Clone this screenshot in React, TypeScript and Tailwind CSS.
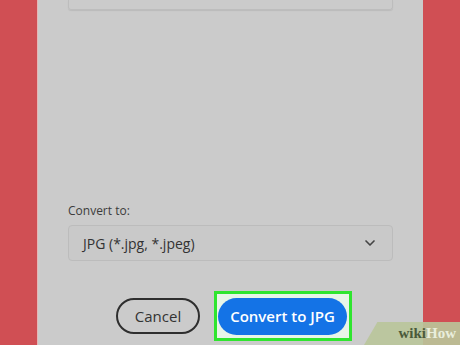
import { ChevronDown } from 'lucide-react';

export default function App() {
  return (
    <div
      className="relative w-[460px] h-[345px] overflow-hidden bg-[#d04f54] flex"
      style={{ fontFamily: '"Open Sans", "Noto Sans", sans-serif' }}
    >
      <div className="w-[37px] shrink-0" />
      <div className="w-[386px] shrink-0 bg-[#cbcbcb] border-l border-[#e6b5b5] flex flex-col">
        {/* top field, cut off */}
        <div className="mx-[30px] h-[10px] border border-t-0 border-[#bdbdbd] rounded-b-[3px] shadow-[0_1px_1px_rgba(0,0,0,0.08)]" />

        <div className="mt-[195px] mx-[30px] text-[12px] text-[#3c3c3c] leading-none">Convert to:</div>
        <div className="mt-[8px] mx-[30px] h-[36px] border border-[#bcbcbc] rounded-[4px] bg-[#c9c9c9] flex items-center justify-between pl-[14px] pr-[14px] text-[#333]">
          <span className="text-[14px]">JPG (*.jpg, *.jpeg)</span>
          <ChevronDown size={16} strokeWidth={2.5} className="text-[#444]" />
        </div>

        <div className="mt-[30px] flex items-start">
          <div className="ml-[78px] mt-[7px] w-[84px] h-[36px] rounded-full border-2 border-[#2e2e2e] flex items-center justify-center text-[15px] text-[#333]">
            Cancel
          </div>
          <div className="ml-[14px] w-[138px] h-[50px] border-[3px] border-[#2fe52f] bg-[#e8f5e8] p-[1px] flex items-center">
            <div className="w-[129px] h-[37px] rounded-full bg-[#1473e6] flex items-center justify-center text-white font-semibold text-[15px]">
              Convert to JPG
            </div>
          </div>
        </div>
      </div>

      {/* wikiHow watermark */}
      <div className="absolute right-0 bottom-0 w-[96px] h-[23px] bg-[#b9c59a]/90 [clip-path:polygon(14%_0,100%_0,100%_100%,0_100%)] flex items-center justify-end pr-[4px]">
        <span className="text-[15px] font-bold leading-none" style={{ fontFamily: '"Liberation Serif", serif' }}>
          <span className="text-[#4b5a3a]">wiki</span>
          <span className="text-[#e9eedc]">How</span>
        </span>
      </div>
    </div>
  );
}
